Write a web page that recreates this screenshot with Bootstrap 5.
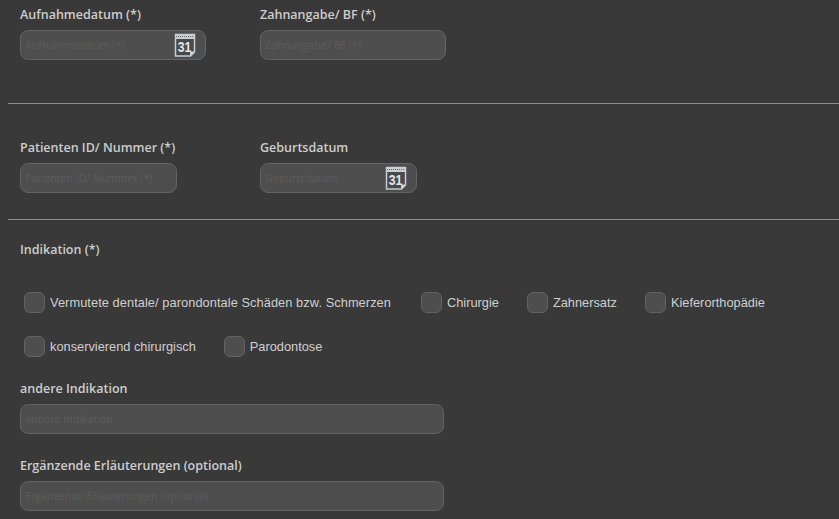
<!DOCTYPE html>
<html lang="de"><head><meta charset="utf-8"><title>Formular</title>
<link href="https://cdn.jsdelivr.net/npm/bootstrap@5.3.0/dist/css/bootstrap.min.css" rel="stylesheet">
<style>
html,body{height:100%;overflow:hidden}
body{background:#393939;font-family:"Open Sans","Noto Sans",sans-serif;color:#d4d4d4;padding:0 0 0 8px}
.sect{padding-left:12px}
.sect-a{height:103px;padding-top:6px}
.sect-b{height:115px;padding-top:35px}
.sect-c{padding-top:21px}
.fld{width:186px}
.fld-b{width:157px}
.fld-wide{width:424px}
.lbl{display:block;font-size:12.500px;font-weight:600;line-height:18px;margin:0 0 6px;color:#cdcdcd}
.inp{position:relative}
.form-control.tx{height:30px;padding:0 4px;background:#4e4e4e;border:1px solid #636363;border-radius:8px;font-size:10.700px;color:#ddd;box-shadow:none}
.form-control.tx::placeholder{color:#5c5c5c;opacity:1}
.cal{position:absolute;right:10px;top:3px;width:22px;height:24px}
.rule{height:1px;background:#8d8d8d;opacity:1;margin:0;border:0}
.gap54{gap:54px}
.gap83{gap:83px}
.checks{padding-left:4px}
.chk-row{height:44px;align-items:flex-start}
.form-check-input.cb{width:21px;height:21px;margin:0;background-color:#4e4e4e;border:1px solid #636363;border-radius:6px;flex:none}
.cb-lbl{font-family:"Liberation Sans",Arial,sans-serif;font-size:12.800px;color:#cfcfcf;margin-left:5px;line-height:21px}
.cb-lbl-long{letter-spacing:.07px}
.mt-ind{margin-top:33px}
.after-a{margin-right:30px}
.after-b{margin-right:28px}
.mt-next{margin-top:23px}
</style></head><body>
<div class="sect sect-a d-flex gap54">
  <div class="fld"><label class="lbl">Aufnahmedatum (*)</label>
    <div class="inp"><input class="form-control tx" placeholder="Aufnahmedatum (*)">
    <svg class="cal" viewBox="0 0 22 24"><path d="M1.500 1.500H20.500V19L16.500 23H1.500Z" fill="#464a4e" stroke="#c4ccd2" stroke-width="1.500"/><rect x="1" y="1" width="20" height="5" fill="#c9ced2"/><path d="M2 3.500H20" stroke="#666" stroke-dasharray="1 1"/><path d="M20.500 19H16.500V23" fill="#d5d8da" stroke="#c4ccd2"/><text x="0" y="0" transform="translate(10.500 19) scale(.84 1)" text-anchor="middle" font-family="Liberation Sans" font-weight="700" font-size="14.500" fill="#e6e6e6">31</text></svg></div></div>
  <div class="fld"><label class="lbl">Zahnangabe/ BF (*)</label>
    <div class="inp"><input class="form-control tx" placeholder="Zahnangabe/ BF (*)"></div></div>
</div>
<hr class="rule">
<div class="sect sect-b d-flex gap83">
  <div class="fld-b"><label class="lbl">Patienten ID/ Nummer (*)</label>
    <div class="inp"><input class="form-control tx" placeholder="Patienten ID/ Nummer (*)"></div></div>
  <div class="fld-b"><label class="lbl">Geburtsdatum</label>
    <div class="inp"><input class="form-control tx" placeholder="Geburtsdatum">
    <svg class="cal" viewBox="0 0 22 24"><path d="M1.500 1.500H20.500V19L16.500 23H1.500Z" fill="#464a4e" stroke="#c4ccd2" stroke-width="1.500"/><rect x="1" y="1" width="20" height="5" fill="#c9ced2"/><path d="M2 3.500H20" stroke="#666" stroke-dasharray="1 1"/><path d="M20.500 19H16.500V23" fill="#d5d8da" stroke="#c4ccd2"/><text x="0" y="0" transform="translate(10.500 19) scale(.84 1)" text-anchor="middle" font-family="Liberation Sans" font-weight="700" font-size="14.500" fill="#e6e6e6">31</text></svg></div></div>
</div>
<hr class="rule">
<div class="sect sect-c">
  <label class="lbl">Indikation (*)</label>
  <div class="checks mt-ind">
    <div class="d-flex chk-row">
      <label class="d-flex after-a"><input type="checkbox" class="form-check-input cb"><span class="cb-lbl cb-lbl-long">Vermutete dentale/ parondontale Schäden bzw. Schmerzen</span></label>
      <label class="d-flex after-b"><input type="checkbox" class="form-check-input cb"><span class="cb-lbl">Chirurgie</span></label>
      <label class="d-flex after-b"><input type="checkbox" class="form-check-input cb"><span class="cb-lbl">Zahnersatz</span></label>
      <label class="d-flex"><input type="checkbox" class="form-check-input cb"><span class="cb-lbl">Kieferorthopädie</span></label>
    </div>
    <div class="d-flex chk-row">
      <label class="d-flex after-b"><input type="checkbox" class="form-check-input cb"><span class="cb-lbl">konservierend chirurgisch</span></label>
      <label class="d-flex"><input type="checkbox" class="form-check-input cb"><span class="cb-lbl">Parodontose</span></label>
    </div>
  </div>
  <div class="fld-wide"><label class="lbl">andere Indikation</label>
    <input class="form-control tx" placeholder="andere Indikation"></div>
  <div class="fld-wide mt-next"><label class="lbl">Ergänzende Erläuterungen (optional)</label>
    <input class="form-control tx" placeholder="Ergänzende Erläuterungen (optional)"></div>
</div>
<script src="https://cdn.jsdelivr.net/npm/bootstrap@5.3.0/dist/js/bootstrap.bundle.min.js"></script>
</body></html>
